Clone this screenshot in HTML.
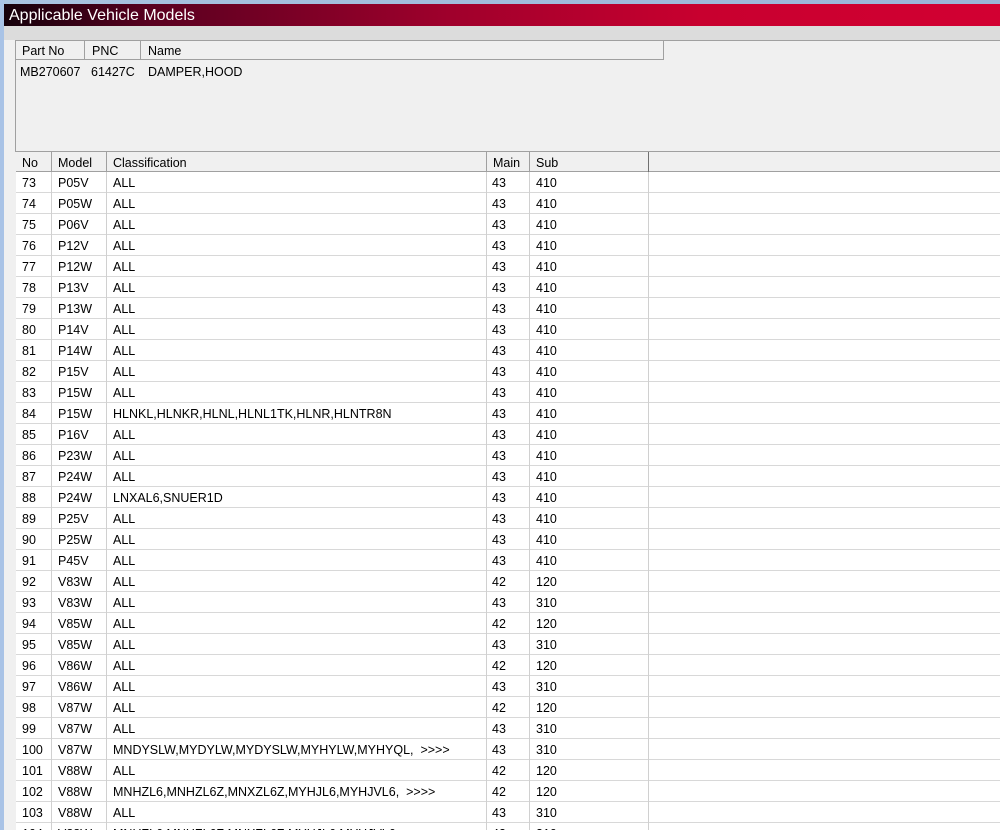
<!DOCTYPE html>
<html><head><style>
*{margin:0;padding:0;box-sizing:border-box}
html,body{width:1000px;height:830px;overflow:hidden}
body{background:#f0f0f0;font-family:"Liberation Sans",Arial,sans-serif;font-size:12.5px;color:#000;position:relative}
.a{position:absolute}
.blue{left:0;top:0;width:1000px;height:4px;background:linear-gradient(90deg,#a9c3e0,#9ab5d8)}
.lblue{left:0;top:0;width:4px;height:830px;background:#a9c3e6}
.title{left:4px;top:4px;width:996px;height:22px;background:linear-gradient(90deg,#14000a 0%,#5a0020 15%,#a0002c 45%,#c8002f 70%,#d20032 100%);color:#fff;font-size:16px;line-height:23px;padding-left:5px}
.strip{left:4px;top:26px;width:996px;height:14px;background:#dcdcdc}
.panel{left:15px;top:40px;width:985px;height:112px;border-left:1px solid #a0a0a0;border-top:1px solid #a0a0a0;background:#f0f0f0}
.vl{width:1px;background:#a0a0a0}
.row{left:16px;width:984px;height:21px;background:#fff;border-bottom:1px solid #d8d8d8}
.row span,.th span{position:absolute;line-height:20px;top:1px}
</style></head><body>
<div class="a blue"></div>
<div class="a lblue"></div>
<div class="a title">Applicable Vehicle Models</div>
<div class="a strip"></div>
<div class="a panel"></div>
<div class="a" style="left:16px;top:41px;width:648px;height:19px;border-bottom:1px solid #a0a0a0;border-right:1px solid #a0a0a0;background:#f0f0f0"></div>
<div class="a vl" style="left:84px;top:41px;height:19px"></div>
<div class="a vl" style="left:140px;top:41px;height:19px"></div>
<div class="a" style="left:22px;top:44px">Part No</div>
<div class="a" style="left:92px;top:44px">PNC</div>
<div class="a" style="left:148px;top:44px">Name</div>
<div class="a" style="left:20px;top:65px">MB270607</div>
<div class="a" style="left:91px;top:65px">61427C</div>
<div class="a" style="left:148px;top:65px">DAMPER,HOOD</div>
<div class="a th" style="left:16px;top:151px;width:984px;height:21px;border-top:1px solid #a0a0a0;border-bottom:1px solid #a0a0a0;background:#f0f0f0">
<span style="left:6px">No</span><span style="left:42px">Model</span><span style="left:97px">Classification</span><span style="left:477px">Main</span><span style="left:520px">Sub</span>
</div>
<div class="a vl" style="left:51px;top:152px;height:20px"></div>
<div class="a vl" style="left:106px;top:152px;height:20px"></div>
<div class="a vl" style="left:486px;top:152px;height:20px"></div>
<div class="a vl" style="left:529px;top:152px;height:20px"></div>
<div class="a vl" style="left:648px;top:152px;height:20px;background:#707070"></div>
<div id="rows"></div>
<script>
var d=[["73","P05V","ALL","43","410"],["74","P05W","ALL","43","410"],["75","P06V","ALL","43","410"],["76","P12V","ALL","43","410"],["77","P12W","ALL","43","410"],["78","P13V","ALL","43","410"],["79","P13W","ALL","43","410"],["80","P14V","ALL","43","410"],["81","P14W","ALL","43","410"],["82","P15V","ALL","43","410"],["83","P15W","ALL","43","410"],["84","P15W","HLNKL,HLNKR,HLNL,HLNL1TK,HLNR,HLNTR8N","43","410"],["85","P16V","ALL","43","410"],["86","P23W","ALL","43","410"],["87","P24W","ALL","43","410"],["88","P24W","LNXAL6,SNUER1D","43","410"],["89","P25V","ALL","43","410"],["90","P25W","ALL","43","410"],["91","P45V","ALL","43","410"],["92","V83W","ALL","42","120"],["93","V83W","ALL","43","310"],["94","V85W","ALL","42","120"],["95","V85W","ALL","43","310"],["96","V86W","ALL","42","120"],["97","V86W","ALL","43","310"],["98","V87W","ALL","42","120"],["99","V87W","ALL","43","310"],["100","V87W","MNDYSLW,MYDYLW,MYDYSLW,MYHYLW,MYHYQL,&nbsp;&nbsp;&gt;&gt;&gt;&gt;","43","310"],["101","V88W","ALL","42","120"],["102","V88W","MNHZL6,MNHZL6Z,MNXZL6Z,MYHJL6,MYHJVL6,&nbsp;&nbsp;&gt;&gt;&gt;&gt;","42","120"],["103","V88W","ALL","43","310"],["104","V88W","MNHZL6,MNHZL6Z,MNXZL6Z,MYHJL6,MYHJVL6","43","310"]];
var h="";
d.forEach(function(r,i){var t=172+21*i;
h+='<div class="a row" style="top:'+t+'px"><span style="left:6px">'+r[0]+'</span><span style="left:42px">'+r[1]+'</span><span style="left:97px">'+r[2]+'</span><span style="left:476px">'+r[3]+'</span><span style="left:520px">'+r[4]+'</span></div>';});
h+='<div class="a vl" style="left:51px;top:172px;height:658px;background:#d0d0d0"></div><div class="a vl" style="left:106px;top:172px;height:658px;background:#d0d0d0"></div><div class="a vl" style="left:486px;top:172px;height:658px;background:#d0d0d0"></div><div class="a vl" style="left:529px;top:172px;height:658px;background:#d0d0d0"></div><div class="a vl" style="left:648px;top:172px;height:658px;background:#d0d0d0"></div>';
document.getElementById("rows").innerHTML=h;
</script>
</body></html>
